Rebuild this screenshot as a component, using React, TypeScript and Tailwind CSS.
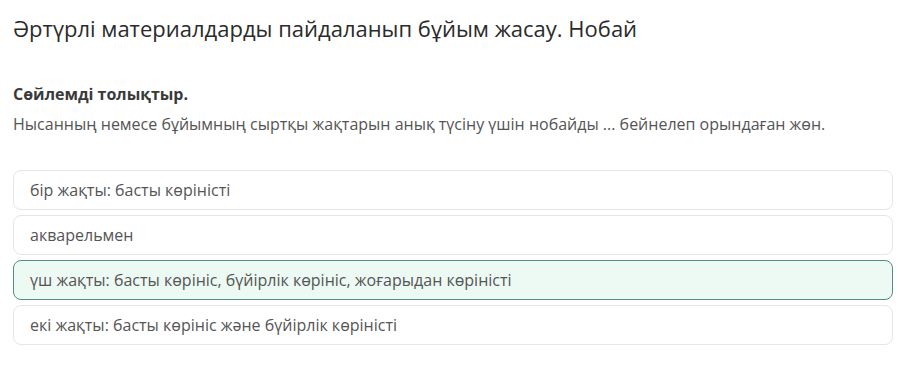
import React from "react";

type Option = {
  text: string;
  selected?: boolean;
};

const options: Option[] = [
  { text: "бір жақты: басты көріністі" },
  { text: "акварельмен" },
  { text: "үш жақты: басты көрініс, бүйірлік көрініс, жоғарыдан көріністі", selected: true },
  { text: "екі жақты: басты көрініс және бүйірлік көріністі" },
];

const App = () => {
  return (
    <div className="min-h-screen bg-white pl-[13px] pt-[13px] font-['Open_Sans',sans-serif] antialiased">
      <h1 className="text-[22px] leading-[30px] font-normal text-[#2b2b2b]">
        Әртүрлі материалдарды пайдаланып бұйым жасау. Нобай
      </h1>

      <p className="mt-[39px] text-[16px] leading-6 font-bold text-[#3a3a3a]">
        Сөйлемді толықтыр.
      </p>
      <p className="mt-[6px] text-[16px] leading-6 text-[#555]">
        Нысанның немесе бұйымның сыртқы жақтарын анық түсіну үшін нобайды ... бейнелеп орындаған жөн.
      </p>

      <div className="mt-[34px] flex w-[880px] flex-col gap-[5px]">
        {options.map((item) => (
          <div
            key={item.text}
            className={
              item.selected
                ? "flex h-10 items-center rounded-lg border border-[#4f8f8a] bg-[#edf9f3] px-4 text-[16px] text-[#555]"
                : "flex h-10 items-center rounded-lg border border-[#e6e6e6] bg-white px-4 text-[16px] text-[#555]"
            }
          >
            {item.text}
          </div>
        ))}
      </div>
    </div>
  );
};

export default App;
